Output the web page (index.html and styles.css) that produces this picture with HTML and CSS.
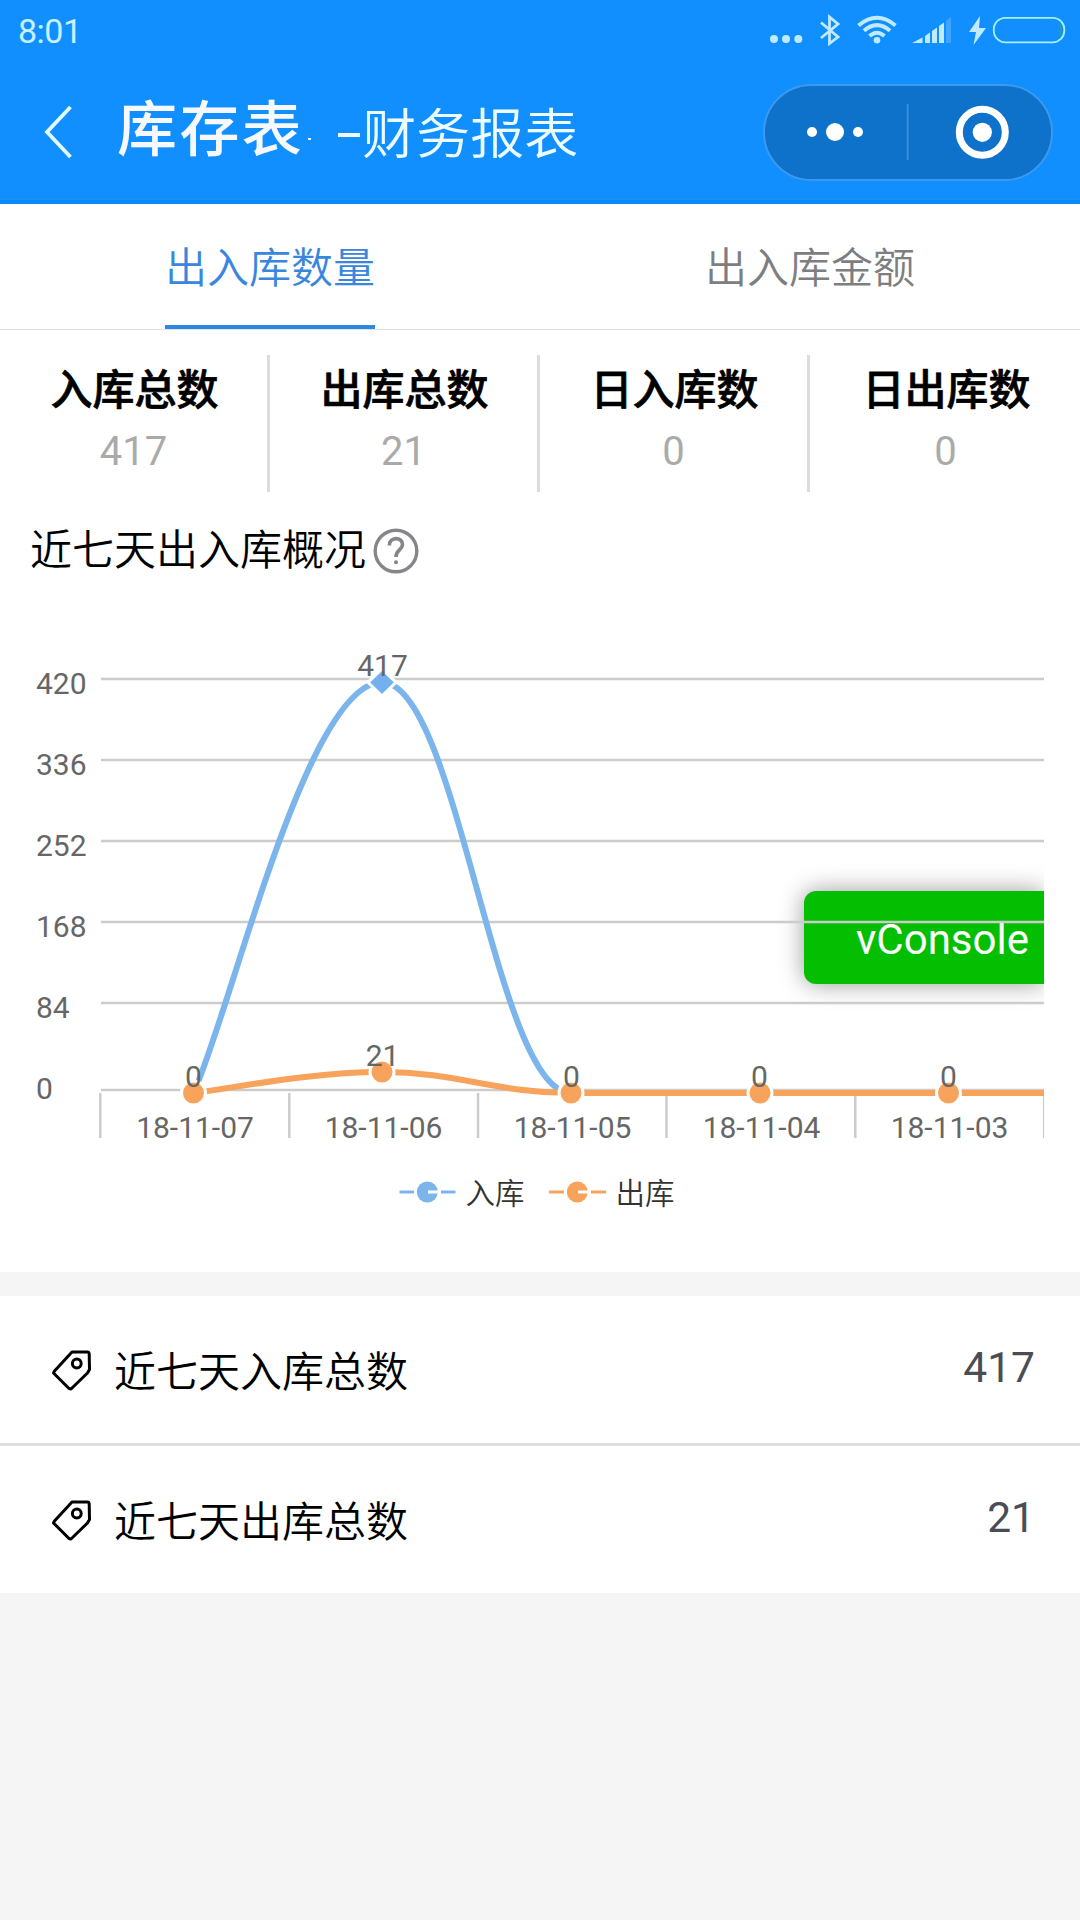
FILE: index.html
```html
<!DOCTYPE html>
<html lang="zh-CN">
<head>
  <meta charset="UTF-8">
  <title>库存表-财务报表</title>
  <link rel="stylesheet" href="styles.css">
</head>
<body>
  <header class="header">
    <div class="status-bar">
      <span class="time">8:01</span>
      <svg class="status-icons" width="300" height="36" viewBox="770 13 300 36">
        <g fill="#bfeaff">
          <circle cx="774" cy="39" r="4"/>
          <circle cx="786" cy="39" r="4"/>
          <circle cx="798.3" cy="39" r="4"/>
          <circle cx="877" cy="40.3" r="3.3"/>
          <path d="M912 43L922.5 37.500V43ZM925 36L930 32.500V43H925ZM932 31L937 27.500V43H932ZM939 26L944 22.500V43H939Z"/>
          <path d="M980 16L969 32H976L973.500 45L986 28H979Z"/>
        </g>
        <path d="M946 21L951 17V43H946Z" fill="#3fa6ff"/>
        <g fill="none" stroke="#bfeaff">
          <path d="M821 22.500L838 37L829.500 43.500V17L838 24L821 38" stroke-width="2.800"/>
          <path d="M858.500 25.500Q877 10 895.500 25.500M864 30.800Q877 19.500 890 30.800M869.500 36Q877 29.500 884.500 36" stroke-width="3.900"/>
          <rect x="993.800" y="17.800" width="70.500" height="24.500" rx="11.500" stroke-width="1.800" stroke="#a5efff"/>
        </g>
        <path d="M1059.500 22Q1062 24.500 1062 30Q1062 35 1059.500 37.500Z" fill="#2b9aa8"/>
      </svg>
    </div>
    <div class="nav-bar">
      <svg class="back" width="28" height="54" viewBox="0 0 28 54">
        <path d="M26.500 2L3 27L26.500 52" fill="none" stroke="#e2fbff" stroke-width="3.800"/>
      </svg>
      <h1 class="title">库存表</h1>
      <i class="title-dot"></i>
      <span class="subtitle"><i class="dash"></i>财务报表</span>
      <svg class="capsule" width="290" height="97" viewBox="763 84 290 97">
        <rect x="764" y="85" width="288" height="95" rx="47.500" fill="#0e72ca" stroke="#3b9af0" stroke-width="2"/>
        <path d="M907.700 104V160" stroke="#3b8fdc" stroke-width="1.800"/>
        <g fill="#fff">
          <circle cx="812" cy="132" r="5"/>
          <circle cx="835" cy="132" r="9"/>
          <circle cx="858" cy="132" r="5"/>
          <circle cx="982.300" cy="132.300" r="9.600"/>
        </g>
        <circle cx="982.300" cy="132.300" r="23" fill="none" stroke="#fff" stroke-width="7"/>
      </svg>
    </div>
  </header>

  <nav class="tabs">
    <div class="tab active"><span>出入库数量</span></div>
    <div class="tab"><span>出入库金额</span></div>
  </nav>

  <section class="summary">
    <div class="stat"><b>入库总数</b><span>417</span></div>
    <div class="stat"><b>出库总数</b><span>21</span></div>
    <div class="stat"><b>日入库数</b><span>0</span></div>
    <div class="stat"><b>日出库数</b><span>0</span></div>
  </section>

  <h2 class="section-title">近七天出入库概况
    <svg width="46" height="46" viewBox="0 0 46 46" fill="none" stroke="#85868a">
      <circle cx="23" cy="23" r="20.800" stroke-width="3.400"/>
      <path d="M16.300 17.500C16.300 8.500 29.500 8.500 29.500 16.500C29.500 22 23 21.500 23 29" stroke-width="3.600"/>
      <circle cx="23" cy="34.300" r="2" fill="#85868a" stroke="none"/>
    </svg>
  </h2>

  <section class="chart">
    <div class="console-wrap"><div class="vconsole">vConsole</div></div>
    <svg class="plot" width="1080" height="690" viewBox="0 581 1080 690">
      <!-- grid and ticks -->
      <path class="grid" d="M101 679H1044M101 760H1044M101 841H1044M101 922H1044M101 1003H1044M101 1090H1044"/>
      <path class="grid" d="M100.300 1093V1138M289.300 1093V1138M478 1093V1138M666.500 1093V1138M855.300 1093V1138"/>
      <path class="grid last" d="M1043.500 1093V1138"/>

      <g class="axis">
        <text x="36" y="694">420</text>
        <text x="36" y="775">336</text>
        <text x="36" y="856">252</text>
        <text x="36" y="937">168</text>
        <text x="36" y="1018">84</text>
        <text x="36" y="1099">0</text>
      </g>
      <g class="axis mid">
        <text x="195" y="1138">18-11-07</text>
        <text x="383.500" y="1138">18-11-06</text>
        <text x="572.500" y="1138">18-11-05</text>
        <text x="761.500" y="1138">18-11-04</text>
        <text x="949.500" y="1138">18-11-03</text>
      </g>

      <!-- in -->
      <path class="line in" d="M193.500 1093C231.200 1010.900 306.500 682.300 382 682.300S495.500 1093 571 1093H1044"/>
      <path d="M382 669L396 682.300L382 696L368 682.300Z" fill="#72b0ef" stroke="#fff" stroke-width="3"/>

      <!-- out -->
      <path class="line out" d="M193.500 1093C231.200 1088.800 306.500 1072 382 1072S495.500 1093 571 1093H1044"/>
      <g class="points">
        <circle cx="193.500" cy="1093" r="12"/>
        <circle cx="382" cy="1072" r="12"/>
        <circle cx="571" cy="1093" r="12"/>
        <circle cx="760" cy="1093" r="12"/>
        <circle cx="948.500" cy="1093" r="12"/>
      </g>

      <g class="axis mid">
        <text x="382.500" y="675.500">417</text>
        <text x="382.500" y="1066">21</text>
        <text x="193.500" y="1087">0</text>
        <text x="571.500" y="1087">0</text>
        <text x="759.500" y="1087">0</text>
        <text x="948.500" y="1087">0</text>
      </g>

      <!-- legend -->
      <g stroke-width="3">
        <path d="M399.500 1192H414M441 1192H455.500" stroke="#7cb5ec"/>
        <circle cx="427.300" cy="1192" r="10.500" fill="#7cb5ec"/>
        <path d="M428 1192H438" stroke="#fff"/>
        <path d="M549 1192H564M591 1192H606" stroke="#f7a35c"/>
        <circle cx="577.300" cy="1192" r="10.500" fill="#f7a35c"/>
        <path d="M578 1192H588" stroke="#fff"/>
      </g>
      <text class="legend" x="465.500" y="1204">入库</text>
      <text class="legend" x="615.500" y="1204">出库</text>
    </svg>
  </section>

  <ul class="list">
    <li class="row">
      <svg class="tag" width="42" height="42" viewBox="0 0 42 42">
        <path d="M22 3H37.500Q39 3 39.200 5L39.500 20.500L37.500 24L21 40L19 39.500L3.500 24L4.500 22Z"/>
        <circle cx="26.800" cy="14.500" r="4.400"/>
      </svg>
      <span class="name">近七天入库总数</span>
      <span class="value">417</span>
    </li>
    <li class="row">
      <svg class="tag" width="42" height="42" viewBox="0 0 42 42">
        <path d="M22 3H37.500Q39 3 39.200 5L39.500 20.500L37.500 24L21 40L19 39.500L3.500 24L4.500 22Z"/>
        <circle cx="26.800" cy="14.500" r="4.400"/>
      </svg>
      <span class="name">近七天出库总数</span>
      <span class="value">21</span>
    </li>
  </ul>
</body>
</html>
```
FILE: styles.css
```css
* {
  box-sizing: border-box;
}

body {
  margin: 0;
  min-height: 1920px;
  background: #f5f5f5;
  color: #000;
  font-family: Roboto, "Noto Sans CJK SC", sans-serif;
  font-size: 42px;
  font-weight: 400;
  line-height: 60px;
}

svg {
  display: block;
  flex: none;
}

/* header */
.header {
  height: 204px;
  background: linear-gradient(#118fff 199px, #2f8ae6 199px, #2f8ae6 200px, #068bff 200px);
}

.status-bar {
  display: flex;
  justify-content: space-between;
  height: 60px;
  padding: 0 10px 0 18px;
}

.time {
  margin-top: 1px;
  color: #c8f0ff;
  font-size: 34px;
  letter-spacing: -0.5px;
}

.status-icons {
  margin-top: 13px;
}

.nav-bar {
  display: flex;
  align-items: center;
  height: 144px;
  padding: 0 27px 0 45px;
  color: #fff;
}

.back {
  margin-left: -1px;
}

.title {
  margin: -3px 0 0 45px;
  color: #f7f8fc;
  font-size: 60px;
  letter-spacing: 2.4px;
  font-weight: 500;
}

.title-dot {
  width: 3px;
  height: 2px;
  margin: 14px 0 0 4px;
  background: #eaf6ff;
}

.subtitle {
  display: flex;
  align-items: center;
  margin: 7px 0 0 27px;
  font-size: 54px;
  font-weight: 350;
  color: #ecfcff;
}

.dash {
  width: 22px;
  height: 4px;
  margin: -1px 2px 0 0;
  background: #ecfcff;
}

.capsule {
  margin-left: auto;
}

/* tabs */
.tabs {
  display: flex;
  height: 126px;
  background: #fff;
  border-bottom: 1px solid #e2e2e4;
}

.tab {
  display: flex;
  flex: 1;
  justify-content: center;
  color: #7d7e82;
  font-weight: 350;
}

.tab span {
  height: 125px;
  padding-top: 35px;
}

.tab.active span {
  color: #3a86de;
  border-bottom: 4px solid #2d87e0;
}

/* totals */
.summary {
  display: grid;
  grid-template-columns: repeat(4, 270px);
  padding: 25px 0 29px;
  background: #fff;
}

.stat {
  display: flex;
  flex-direction: column;
  align-items: center;
  height: 137px;
  padding: 6px 0 0 2px;
  border-right: 3px solid #dcdcdc;
}

.stat:last-child {
  padding-left: 3px;
  border-right: none;
}

.stat b {
  font-weight: 500;
  -webkit-text-stroke: 0.7px #000;
}

.stat span {
  margin: 1px 2px 0 0;
  color: #aaa;
  font-size: 40px;
}

.section-title {
  display: flex;
  align-items: center;
  height: 60px;
  margin: 0;
  padding-left: 30px;
  background: #fff;
  font-size: 42px;
  font-weight: 350;
}

.section-title svg {
  margin-left: 7px;
}

/* chart */
.chart {
  position: relative;
  height: 691px;
  background: #fff;
}

.plot {
  position: relative;
}

.console-wrap {
  position: absolute;
  top: 270px;
  right: 36px;
  width: 280px;
  padding: 40px 0 40px 40px;
  overflow: hidden;
}

.vconsole {
  height: 93px;
  padding-left: 52px;
  border-radius: 12px 0 0 12px;
  background: #04be02;
  box-shadow: 0 0 24px rgba(0, 0, 0, 0.4);
  color: #fff;
  line-height: 97px;
}

.grid {
  fill: none;
  stroke: #ccc;
  stroke-width: 2.5;
}

.grid.last {
  stroke-width: 1.2;
}

.line {
  fill: none;
  stroke-width: 6;
}

.line.in {
  stroke: #7cb5ec;
}

.line.out {
  stroke: #f7a35c;
}

.points {
  fill: #f7a35c;
  stroke: #fff;
  stroke-width: 3;
}

.axis {
  fill: #666;
  font-size: 30px;
}

.mid {
  text-anchor: middle;
}

.legend {
  fill: #333;
  font-size: 29.5px;
  font-weight: 350;
}

/* list */
.list {
  margin: 24px 0 0;
  padding: 0;
  list-style: none;
}

.row {
  display: flex;
  align-items: center;
  height: 147px;
  padding: 0 45px 0 50px;
  background: #fff;
}

.row + .row {
  height: 150px;
  border-top: 3px solid #dedede;
}

.tag {
  fill: none;
  stroke: #000;
  stroke-width: 3;
  stroke-linejoin: round;
}

.name {
  flex: 1;
  padding: 6px 0 0 22px;
  font-weight: 350;
}

.value {
  margin-top: -3px;
  color: #4a4d54;
  font-size: 42.5px;
}
```
